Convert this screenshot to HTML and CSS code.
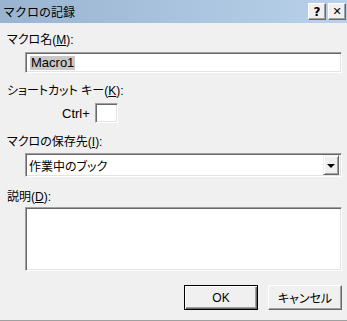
FILE: index.html
```html
<!DOCTYPE html>
<html lang="ja">
<head>
    <meta charset="UTF-8">
    <meta name="viewport" content="width=device-width, initial-scale=1.0">
    <title>マクロの記録</title>
    <link rel="stylesheet" href="styles.css">
</head>
<body>
    <div class="dialog">
        <div class="titlebar">
            <span class="title">マクロの記録</span>
            <div class="title-btns">
                <span class="cap-btn">?</span>
                <span class="cap-btn cap-close">&#x2715;</span>
            </div>
        </div>

        <div class="content">
            <div class="label">マクロ名(<u>M</u>):</div>
            <div class="field field-name"><span class="selected">Macro1</span></div>

            <div class="label label-gap">ショートカット キー(<u>K</u>):</div>
            <div class="shortcut-row">
                <span class="ctrl">Ctrl+</span>
                <div class="field field-key"></div>
            </div>

            <div class="label label-gap2">マクロの保存先(<u>I</u>):</div>
            <div class="field combo">
                <span class="combo-text">作業中のブック</span>
                <span class="combo-btn"><span class="arrow"></span></span>
            </div>

            <div class="label label-gap3">説明(<u>D</u>):</div>
            <div class="field field-desc"></div>

            <div class="buttons">
                <button class="btn btn-default">OK</button>
                <button class="btn">キャンセル</button>
            </div>
        </div>
    </div>
</body>
</html>
```

FILE: styles.css
```css
body {
    margin: 0;
    padding: 0;
    background: #f0f0f0;
    font-family: "Liberation Sans", "Noto Sans CJK JP", sans-serif;
    font-size: 12px;
    color: #000;
}

.dialog {
    width: 347px;
    height: 320px;
    border-bottom: 1px solid #a0a0a0;
    background: #f0f0f0;
    overflow: hidden;
}

/* Title bar */
.titlebar {
    height: 23px;
    display: flex;
    align-items: center;
    justify-content: space-between;
    background: linear-gradient(to right, #99b4d1, #b9d1ea);
}

.title {
    padding-left: 3px;
    font-family: "Noto Sans CJK JP", sans-serif;
    font-size: 12px;
    line-height: 14px;
}

.title-btns {
    display: flex;
    gap: 2px;
    padding-right: 1px;
}

.cap-btn {
    width: 14px;
    height: 13px;
    display: flex;
    align-items: center;
    justify-content: center;
    background: #f0f0f0;
    border: 1px solid;
    border-color: #fff #696969 #696969 #fff;
    box-shadow: inset -1px -1px 0 #a0a0a0;
    padding: 1px;
    font-family: "DejaVu Sans", sans-serif;
    font-weight: bold;
    font-size: 12px;
    line-height: 12px;
}

.cap-close {
    font-size: 11px;
}

/* Body */
.content {
    padding: 0 5px 0 7px;
    display: flex;
    flex-direction: column;
}

.label {
    line-height: 14px;
    height: 14px;
    margin-top: 10px;
    font-feature-settings: "palt";
}

.label u {
    text-underline-offset: 1px;
}

.label-gap { margin-top: 11px; }
.label-gap2 { margin-top: 12px; }
.label-gap3 { margin-top: 13px; }

.field {
    box-sizing: border-box;
    margin-left: 18px;
    background: #fff;
    border: 1px solid;
    border-color: #a0a0a0 #fff #fff #a0a0a0;
    box-shadow: inset 1px 1px 0 #696969, inset -1px -1px 0 #e3e3e3;
}

.field-name {
    height: 21px;
    margin-top: 5px;
    display: flex;
    align-items: center;
    padding-left: 4px;
}

.selected {
    background: #c8c8c8;
    padding: 0 1px;
    line-height: 14px;
    font-size: 13px;
}

.shortcut-row {
    display: flex;
    align-items: center;
    gap: 5px;
    margin-top: 5px;
    margin-left: 55px;
}

.ctrl {
    font-size: 13px;
}

.field-key {
    margin-left: 0;
    width: 23px;
    height: 20px;
}

.combo {
    height: 24px;
    margin-top: 4px;
    display: flex;
    align-items: center;
    justify-content: space-between;
    padding: 0 2px 0 3px;
}

.combo-text {
    font-family: "Noto Sans CJK JP", sans-serif;
    font-feature-settings: "palt";
}

.combo-btn {
    box-sizing: border-box;
    width: 16px;
    height: 20px;
    display: flex;
    align-items: center;
    justify-content: center;
    background: #f0f0f0;
    border: 1px solid;
    border-color: #f0f0f0 #696969 #696969 #f0f0f0;
    box-shadow: inset 1px 1px 0 #fff, inset -1px -1px 0 #a0a0a0;
}

.arrow {
    width: 0;
    height: 0;
    border-left: 4px solid transparent;
    border-right: 4px solid transparent;
    border-top: 4px solid #000;
    margin-top: 1px;
}

.field-desc {
    height: 64px;
    margin-top: 3px;
}

/* Buttons */
.buttons {
    display: flex;
    justify-content: flex-end;
    gap: 10px;
    margin-top: 14px;
}

.btn {
    box-sizing: border-box;
    width: 74px;
    height: 25px;
    padding: 0;
    background: #f0f0f0;
    border: 1px solid;
    border-color: #fff #696969 #696969 #fff;
    box-shadow: inset -1px -1px 0 #a0a0a0;
    font-family: "Liberation Sans", "Noto Sans CJK JP", sans-serif;
    font-size: 12px;
    font-feature-settings: "palt";
    color: #000;
}

.btn-default {
    border: 1px solid #000;
    box-shadow: inset 1px 1px 0 #fff, inset -1px -1px 0 #696969, inset -2px -2px 0 #a0a0a0;
}
```
